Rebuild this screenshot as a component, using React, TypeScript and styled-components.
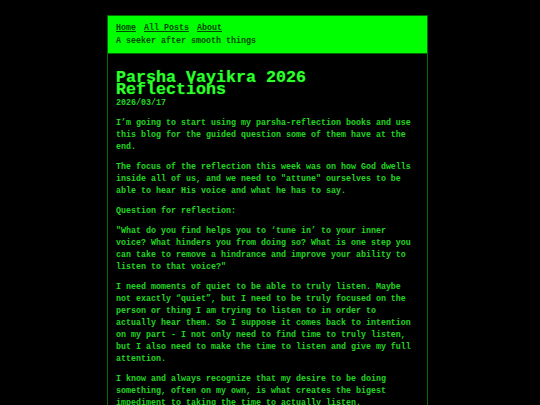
import styled, { createGlobalStyle } from 'styled-components';

const GlobalStyle = createGlobalStyle`
  html, body {
    margin: 0;
    padding: 0;
    background: #000000;
  }
  body {
    padding: 15px 5px 0 0;
    font-family: 'Liberation Mono', 'DejaVu Sans Mono', monospace;
    font-weight: bold;
    -webkit-font-smoothing: none;
  }
`;

const Container = styled.div`
  width: 319px;
  margin: 0 auto;
  border: 1px solid #006a00;
  border-bottom: 0;
  min-height: 400px;
`;

const Header = styled.header`
  background: #00ff00;
  color: #004800;
  padding: 6px 8px 6px;
  border-bottom: 1px solid #006a00;
  font-size: 8.3333px;
  line-height: 12px;
`;

const Nav = styled.nav`
  display: flex;
  gap: 8px;
  margin: 0 0 1px;
`;

const NavLink = styled.a`
  color: #004800;
  text-decoration: underline;
  text-underline-offset: 1px;
`;

const Tagline = styled.div``;

const Article = styled.article`
  padding: 18px 8px 0;
  max-width: 297px;
  color: #22d622;
  font-size: 8.3333px;
  line-height: 12px;
`;

const Title = styled.h1`
  margin: 0;
  font-size: 16.667px;
  line-height: 12px;
  color: #2cff2c;
  text-shadow: 0 0 1px #00aa00;
`;

const PostDate = styled.div`
  margin: 1px 0 0;
  color: #22d622;
`;

const Para = styled.p`
  margin: 8px 0 0;
`;

export default function App() {
  return (
    <>
      <GlobalStyle />
      <Container>
        <Header>
          <Nav>
            <NavLink href="#">Home</NavLink>
            <NavLink href="#">All Posts</NavLink>
            <NavLink href="#">About</NavLink>
          </Nav>
          <Tagline>A seeker after smooth things</Tagline>
        </Header>
        <Article>
          <Title>Parsha Vayikra 2026 Reflections</Title>
          <PostDate>2026/03/17</PostDate>
          <Para>
            I’m going to start using my parsha-reflection books and use this blog for the
            guided question some of them have at the end.
          </Para>
          <Para>
            The focus of the reflection this week was on how God dwells inside all of us, and
            we need to "attune" ourselves to be able to hear His voice and what he has to say.
          </Para>
          <Para>Question for reflection:</Para>
          <Para>
            "What do you find helps you to ‘tune in’ to your inner voice? What hinders you from
            doing so? What is one step you can take to remove a hindrance and improve your
            ability to listen to that voice?"
          </Para>
          <Para>
            I need moments of quiet to be able to truly listen. Maybe not exactly “quiet”, but I
            need to be truly focused on the person or thing I am trying to listen to in order to
            actually hear them. So I suppose it comes back to intention on my part - I not only
            need to find time to truly listen, but I also need to make the time to listen and
            give my full attention.
          </Para>
          <Para>
            I know and always recognize that my desire to be doing something, often on my own,
            is what creates the bigest impediment to taking the time to actually listen.
          </Para>
        </Article>
      </Container>
    </>
  );
}
